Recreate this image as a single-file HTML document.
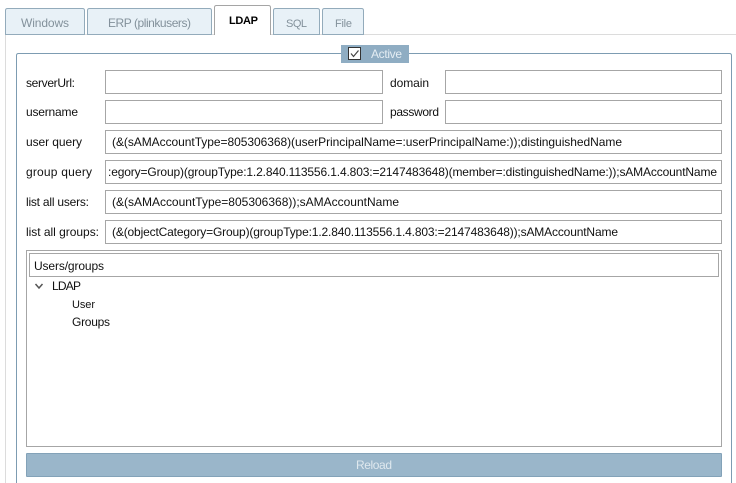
<!DOCTYPE html>
<html><head><meta charset="utf-8"><style>
html,body{margin:0;padding:0;width:736px;height:483px;overflow:hidden;background:#fff}
svg{display:block;font-family:"Liberation Sans",sans-serif;font-size:12px}
.b{shape-rendering:crispEdges}
text{fill:#111}
.in{fill:#fff;stroke:#a6a6a6;stroke-width:1}
.t{fill:#e8f1f7;stroke:#93abbb;stroke-width:1}
.g{fill:#83919b}
</style></head><body>
<svg width="736" height="483" viewBox="0 0 736 483" xmlns="http://www.w3.org/2000/svg">
<path d="M5.5 483V34.5H736" fill="none" stroke="#dcdcdc" class="b"/>
<path class="t" d="M5.5 34.5V10.5Q5.5 8.5 7.5 8.5H82.5Q84.5 8.5 84.5 10.5V34.5Z"/>
<path class="t" d="M87.5 34.5V10.5Q87.5 8.5 89.5 8.5H209.5Q211.5 8.5 211.5 10.5V34.5Z"/>
<path class="t" d="M273.5 34.5V10.5Q273.5 8.5 275.5 8.5H317.5Q319.5 8.5 319.5 10.5V34.5Z"/>
<path class="t" d="M322.5 34.5V10.5Q322.5 8.5 324.5 8.5H361.5Q363.5 8.5 363.5 10.5V34.5Z"/>
<path d="M214.5 35V7.5Q214.5 5.5 216.5 5.5H268.5Q270.5 5.5 270.5 7.5V35" fill="#fff" stroke="#a5a5a5"/>
<rect x="215" y="33" width="55" height="3" fill="#fff"/>
<text class="g" x="21" y="27" textLength="48">Windows</text>
<text class="g" x="108" y="27" textLength="83">ERP (plinkusers)</text>
<text x="229" y="24" textLength="29" font-size="11" font-weight="bold" style="fill:#000">LDAP</text>
<text class="g" x="286" y="27" textLength="21" font-size="11">SQL</text>
<text class="g" x="335" y="27" textLength="17" font-size="11">File</text>

<path d="M16.5 483V55.5Q16.5 53.5 18.5 53.5H729.5Q731.5 53.5 731.5 55.5V483" fill="none" stroke="#7d9cb2"/>
<rect class="b" x="341" y="45" width="68" height="18" fill="#8fadc3"/>
<rect class="b" x="348.5" y="47.5" width="12" height="12" fill="#fff" stroke="#333"/>
<path d="M351 53.5L353.5 56.5L358.5 50.5" fill="none" stroke="#444" stroke-width="1.2"/>
<text x="371" y="58" textLength="31" style="fill:#e4edf3">Active</text>

<g class="b">
<rect class="in" x="105.5" y="70.5" width="277" height="23"/>
<rect class="in" x="445.5" y="70.5" width="276" height="23"/>
<rect class="in" x="105.5" y="100.5" width="277" height="23"/>
<rect class="in" x="445.5" y="100.5" width="276" height="23"/>
<rect class="in" x="105.5" y="130.5" width="616" height="23"/>
<rect class="in" x="105.5" y="160.5" width="616" height="23"/>
<rect class="in" x="105.5" y="190.5" width="616" height="23"/>
<rect class="in" x="105.5" y="220.5" width="616" height="23"/>
<rect class="in" x="26.5" y="250.5" width="695" height="196"/>
<rect class="in" x="29.5" y="253.5" width="689" height="23"/>
<rect x="26.5" y="453.5" width="695" height="23" rx="1" fill="#9ab6ca" stroke="#83a2b8"/>
</g>

<text x="26" y="87" textLength="49">serverUrl:</text>
<text x="390" y="87" textLength="39">domain</text>
<text x="26" y="116" textLength="52">username</text>
<text x="390" y="116" textLength="49">password</text>
<text x="26" y="146" textLength="56">user query</text>
<text x="26" y="176" textLength="66">group query</text>
<text x="26" y="206" textLength="63">list all users:</text>
<text x="26" y="236" textLength="73">list all groups:</text>

<text x="112" y="146" textLength="510">(&amp;(sAMAccountType=805306368)(userPrincipalName=:userPrincipalName:));distinguishedName</text>
<text x="108" y="176" textLength="609">:egory=Group)(groupType:1.2.840.113556.1.4.803:=2147483648)(member=:distinguishedName:));sAMAccountName</text>
<text x="112" y="206" textLength="287">(&amp;(sAMAccountType=805306368));sAMAccountName</text>
<text x="112" y="236" textLength="506">(&amp;(objectCategory=Group)(groupType:1.2.840.113556.1.4.803:=2147483648));sAMAccountName</text>

<text x="34" y="270" textLength="70">Users/groups</text>
<path d="M35.5 284L39 288L42.5 284" fill="none" stroke="#555" stroke-width="1.5"/>
<text x="52" y="290" textLength="29">LDAP</text>
<text x="72" y="308" textLength="23" font-size="11">User</text>
<text x="72" y="326" textLength="38">Groups</text>
<text x="356" y="469" textLength="36" style="fill:#dfe8ee">Reload</text>
</svg>
</body></html>
